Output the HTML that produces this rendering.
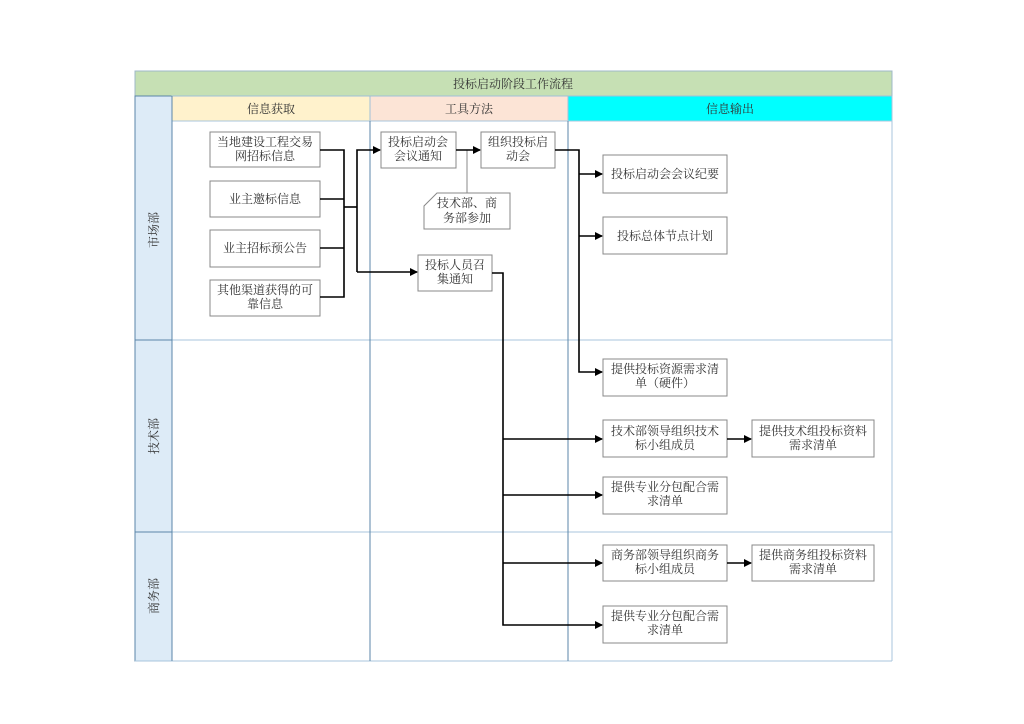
<!DOCTYPE html>
<html><head><meta charset="utf-8"><style>
html,body{margin:0;padding:0;background:#fff;width:1024px;height:724px;overflow:hidden}
svg text{font-family:"Liberation Serif","Noto Serif CJK SC","Noto Sans CJK SC",serif;font-size:12px;fill:#333}
</style></head><body>
<svg width="1024" height="724" viewBox="0 0 1024 724" xmlns="http://www.w3.org/2000/svg">
<defs><marker id="a" markerWidth="8" markerHeight="8" refX="7" refY="4" orient="auto" markerUnits="userSpaceOnUse"><path d="M0,0 L8,4 L0,8 Z" fill="#000"/></marker></defs>
<rect x="135" y="71" width="757" height="25" fill="#c6e0b4" stroke="#9fb8c8"/>
<text x="513" y="88" text-anchor="middle">投标启动阶段工作流程</text>
<rect x="135" y="96" width="37" height="565" fill="#ddebf7" stroke="#5b86a8"/>
<rect x="172" y="96" width="198" height="25" fill="#fff2cc" stroke="#9fc0d8"/>
<rect x="370" y="96" width="198" height="25" fill="#fce4d6" stroke="#9fc0d8"/>
<rect x="568" y="96" width="324" height="25" fill="#00ffff" stroke="#9fc0d8"/>
<text x="271" y="113" text-anchor="middle">信息获取</text>
<text x="469" y="113" text-anchor="middle">工具方法</text>
<text x="730" y="113" text-anchor="middle">信息输出</text>
<g stroke="#a8c6dc" fill="none">
<line x1="172" y1="121" x2="892" y2="121"/>
<line x1="135" y1="340" x2="892" y2="340"/>
<line x1="135" y1="532" x2="892" y2="532"/>
<line x1="135" y1="661" x2="892" y2="661"/>
<line x1="892" y1="96" x2="892" y2="661"/>
</g>
<g stroke="#5b86a8"><line x1="370" y1="121" x2="370" y2="661"/><line x1="568" y1="121" x2="568" y2="661"/><line x1="172" y1="96" x2="172" y2="661"/><line x1="135" y1="340" x2="172" y2="340"/><line x1="135" y1="532" x2="172" y2="532"/></g>
<text transform="translate(158,230) rotate(-90)" text-anchor="middle">市场部</text>
<text transform="translate(158,436) rotate(-90)" text-anchor="middle">技术部</text>
<text transform="translate(158,596) rotate(-90)" text-anchor="middle">商务部</text>
<g fill="#fff" stroke="#888">
<rect x="210" y="132" width="110" height="35"/>
<rect x="210" y="181" width="110" height="36"/>
<rect x="210" y="230" width="110" height="37"/>
<rect x="210" y="280" width="110" height="36"/>
<rect x="381" y="132" width="75" height="36"/>
<rect x="481" y="132" width="74" height="36"/>
<path d="M437,193 L510,193 L510,229 L424,229 L424,206 Z"/>
<rect x="418" y="255" width="74" height="36"/>
<rect x="603" y="155" width="124" height="38"/>
<rect x="603" y="217" width="124" height="37"/>
<rect x="603" y="359" width="124" height="37"/>
<rect x="603" y="420" width="124" height="37"/>
<rect x="603" y="477" width="124" height="37"/>
<rect x="603" y="545" width="124" height="36"/>
<rect x="603" y="606" width="124" height="37"/>
<rect x="752" y="420" width="122" height="37"/>
<rect x="752" y="545" width="122" height="36"/>
</g>
<line x1="467" y1="150" x2="467" y2="193" stroke="#888"/>
<g stroke="#000" stroke-width="1.6" fill="none">
<polyline points="320,150 344,150 344,297 320,297"/>
<line x1="320" y1="199" x2="344" y2="199"/>
<line x1="320" y1="248" x2="344" y2="248"/>
<line x1="344" y1="207" x2="357" y2="207"/>
<polyline points="357,272 357,150 380,150" marker-end="url(#a)"/>
<line x1="357" y1="272" x2="417" y2="272" marker-end="url(#a)"/>
<line x1="456" y1="150" x2="480" y2="150" marker-end="url(#a)"/>
<polyline points="555,150 579,150 579,372 602,372" marker-end="url(#a)"/>
<line x1="579" y1="174" x2="602" y2="174" marker-end="url(#a)"/>
<line x1="579" y1="236" x2="602" y2="236" marker-end="url(#a)"/>
<polyline points="492,273 503,273 503,625 602,625" marker-end="url(#a)"/>
<line x1="503" y1="439" x2="602" y2="439" marker-end="url(#a)"/>
<line x1="503" y1="495" x2="602" y2="495" marker-end="url(#a)"/>
<line x1="503" y1="563" x2="602" y2="563" marker-end="url(#a)"/>
<line x1="727" y1="439" x2="751" y2="439" marker-end="url(#a)"/>
<line x1="727" y1="563" x2="751" y2="563" marker-end="url(#a)"/>
</g>
<g text-anchor="middle">
<text x="265" y="146">当地建设工程交易</text><text x="265" y="160">网招标信息</text>
<text x="265" y="203">业主邀标信息</text>
<text x="265" y="252">业主招标预公告</text>
<text x="265" y="294">其他渠道获得的可</text><text x="265" y="308">靠信息</text>
<text x="418" y="146">投标启动会</text><text x="418" y="160">会议通知</text>
<text x="518" y="146">组织投标启</text><text x="518" y="160">动会</text>
<text x="467" y="207">技术部、商</text><text x="467" y="222">务部参加</text>
<text x="455" y="269">投标人员召</text><text x="455" y="283">集通知</text>
<text x="665" y="178">投标启动会会议纪要</text>
<text x="665" y="240">投标总体节点计划</text>
<text x="665" y="373">提供投标资源需求清</text><text x="665" y="387">单（硬件）</text>
<text x="665" y="435">技术部领导组织技术</text><text x="665" y="449">标小组成员</text>
<text x="665" y="491">提供专业分包配合需</text><text x="665" y="505">求清单</text>
<text x="665" y="559">商务部领导组织商务</text><text x="665" y="573">标小组成员</text>
<text x="665" y="620">提供专业分包配合需</text><text x="665" y="634">求清单</text>
<text x="813" y="435">提供技术组投标资料</text><text x="813" y="449">需求清单</text>
<text x="813" y="559">提供商务组投标资料</text><text x="813" y="573">需求清单</text>
</g>
</svg>
</body></html>
